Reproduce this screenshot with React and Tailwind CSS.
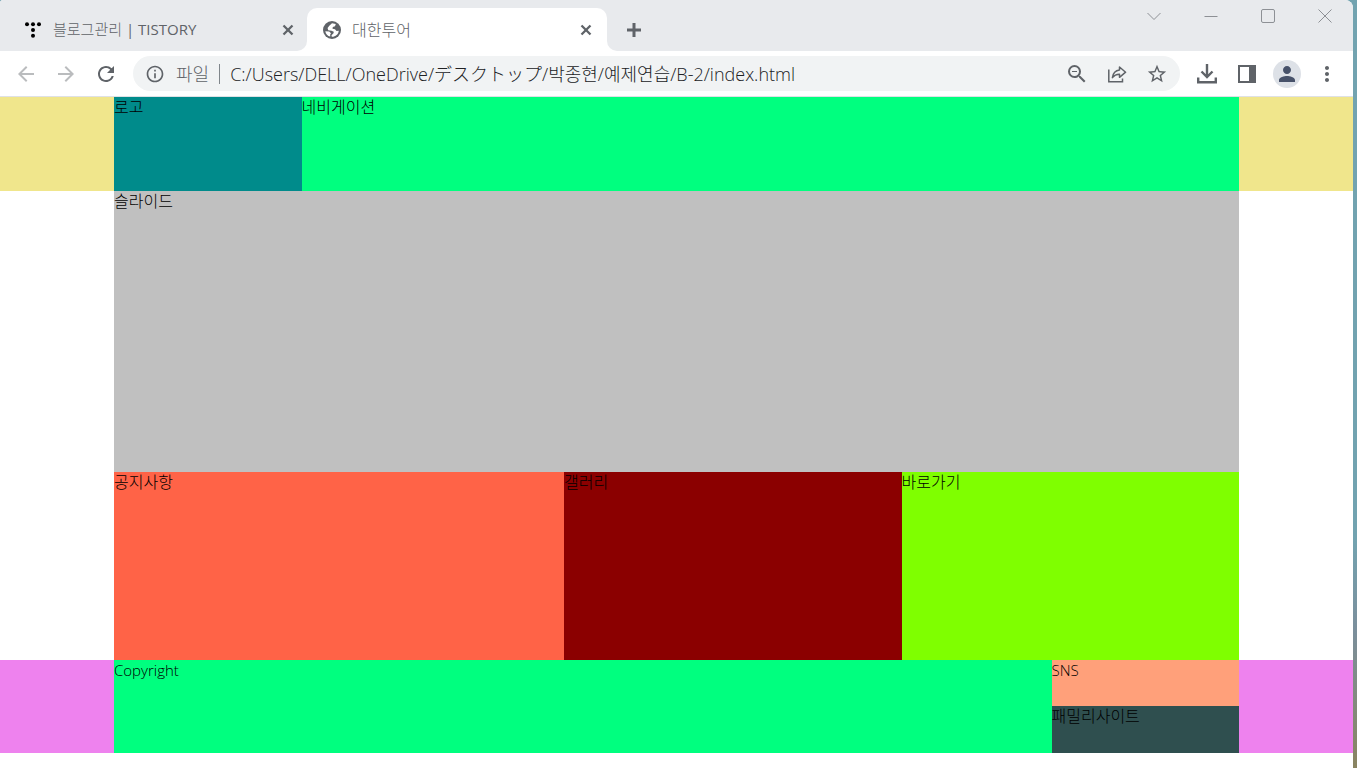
import { useState } from "react"
import { Plus, X } from "lucide-react"
import { MdArrowBack, MdArrowForward, MdRefresh, MdInfoOutline, MdZoomOut, MdStarBorder, MdMoreVert, MdPerson } from "react-icons/md"

const TistoryIcon = () => (
    <svg viewBox="0 0 16 16" className="size-4 shrink-0" fill="#000">
        <circle cx="2" cy="2.2" r="2" />
        <circle cx="8" cy="2.2" r="2" />
        <circle cx="14" cy="2.2" r="2" />
        <circle cx="8" cy="8" r="2" />
        <circle cx="8" cy="13.8" r="2" />
    </svg>
)

const GlobeIcon = () => (
    <svg viewBox="0 0 18 18" className="size-[18px] shrink-0">
        <circle cx="9" cy="9" r="9" fill="#5f6368" />
        <path d="M9 2.200L12.800 3L12 5.200L9.800 6L9.500 7.800L12 8.200L13.500 10L15.800 9.800C15.400 13.500 12.500 15.900 8.800 15.800L8.500 14.200L10.500 12.200L10.800 10.800L8.500 9.800L5.200 9.200L4.600 7L6.300 4.800Z" fill="#fff" />
        <path d="M2.300 10.200L6.200 10.600L8 12.200L7.200 13.600V15.500C4.700 15 2.700 13 2.300 10.200Z" fill="#fff" />
    </svg>
)

const ShareIcon = () => (
    <svg viewBox="0 0 20 20" className="size-5" fill="none" stroke="#5f6368" strokeWidth="1.500">
        <path d="M1.800 5.500V17.700H15.500V14.500" />
        <path d="M12.500 3L18.600 8.200L12.500 13.300V10.300C9.500 10.200 7.300 11.200 5.400 13.600C6 9.600 8.300 6.600 12.500 6.100Z" strokeLinejoin="round" />
    </svg>
)

const DownloadIcon = () => (
    <svg viewBox="0 0 20 20" className="size-5" fill="none" stroke="#5f6368" strokeWidth="2.400">
        <path d="M10 0V13M4.500 7.500L10 13L15.500 7.500" />
        <path d="M1.200 13.500V18.300H18.800V13.500" />
    </svg>
)

const SidePanelIcon = () => (
    <svg viewBox="0 0 18 18" className="size-[18px]">
        <path d="M0 0H18V18H0ZM2 2V16H11V2Z" fill="#5f6368" fillRule="evenodd" />
    </svg>
)

const toolButton = "flex w-10 h-8 shrink-0 items-center justify-center text-[#5f6368]"
const windowButton = "flex w-[57px] h-8 items-center justify-center"

function TabBar() {
    return (
        <div className="flex h-[51px] bg-white text-[#5f6368]">
            <div className="flex w-[307px] shrink-0 items-center rounded-br-[10px] bg-[#e8eaed] pl-[25px] pr-[10px] pt-2">
                <TistoryIcon />
                <span className="ml-3 grow whitespace-nowrap text-[15px]">블로그관리 <span className="font-normal">| TISTORY</span></span>
                <button aria-label="탭 닫기"><X className="size-[18px]" strokeWidth={3} strokeLinecap="butt" /></button>
            </div>
            <div className="w-[300px] shrink-0 bg-[#e8eaed] pt-2">
                <div className="flex h-full items-center rounded-t-[10px] bg-white pl-4 pr-3">
                    <GlobeIcon />
                    <span className="ml-[11px] grow whitespace-nowrap text-base">대한투어</span>
                    <button aria-label="탭 닫기"><X className="size-[18px]" strokeWidth={3} strokeLinecap="butt" /></button>
                </div>
            </div>
            <div className="flex grow items-start rounded-bl-[10px] bg-[#e8eaed]">
                <button aria-label="새 탭" className="mt-[18px] ml-[15px]"><Plus className="size-6" strokeWidth={3} strokeLinecap="butt" /></button>
                <div className="ml-auto flex">
                    <button aria-label="탭 검색" className={windowButton}>
                        <svg viewBox="0 0 14 14" className="size-3.5" fill="none" stroke="#8d9095"><path d="M.5 4L7 10.500L13.500 4" /></svg>
                    </button>
                    <button aria-label="최소화" className={windowButton}>
                        <svg viewBox="0 0 14 14" className="size-3.5" fill="none" stroke="#8d9095"><path d="M.5 7.500H13.500" /></svg>
                    </button>
                    <button aria-label="최대화" className={windowButton}>
                        <svg viewBox="0 0 14 14" className="size-3.5" fill="none" stroke="#8d9095"><rect x=".5" y=".5" width="13" height="13" rx="1.500" /></svg>
                    </button>
                    <button aria-label="닫기" className={windowButton}>
                        <svg viewBox="0 0 14 14" className="size-3.5" fill="none" stroke="#8d9095"><path d="M.5 .5L13.500 13.500M13.500 .5L.5 13.500" /></svg>
                    </button>
                </div>
            </div>
        </div>
    )
}

function AddressBar() {
    const [url, setUrl] = useState("C:/Users/DELL/OneDrive/デスクトップ/박종현/예제연습/B-2/index.html")

    return (
        <div className="flex h-[46px] items-center border-b border-[#dfe1e5] bg-white px-[6px]">
            <button aria-label="뒤로" className={toolButton}><MdArrowBack className="size-6 text-[#babcbe]" /></button>
            <button aria-label="앞으로" className={toolButton}><MdArrowForward className="size-6 text-[#babcbe]" /></button>
            <button aria-label="새로고침" className={toolButton}><MdRefresh className="size-6" /></button>
            <div className="ml-[7px] flex h-[35px] min-w-0 grow items-center rounded-full bg-[#f1f3f4] pl-3 pr-[3px]">
                <MdInfoOutline className="size-5 shrink-0 text-[#5f6368]" />
                <label htmlFor="url" className="ml-[11px] whitespace-nowrap text-lg text-[#5f6368]">파일</label>
                <span className="mx-[10px] h-5 w-px shrink-0 bg-[#80868b]" />
                <input id="url" value={url} onChange={(e) => setUrl(e.target.value)} className="min-w-0 grow text-lg text-[#202124] outline-none" />
                <button aria-label="축소" className={toolButton}><MdZoomOut className="size-6" /></button>
                <button aria-label="공유" className={toolButton}><ShareIcon /></button>
                <button aria-label="북마크" className={toolButton}><MdStarBorder className="size-[22px]" /></button>
            </div>
            <div className="ml-[7px] flex">
                <button aria-label="다운로드" className={toolButton}><DownloadIcon /></button>
                <button aria-label="측면 패널" className={toolButton}><SidePanelIcon /></button>
                <button aria-label="프로필" className={toolButton}>
                    <span className="flex size-7 items-center justify-center rounded-full bg-[#dde1e7]"><MdPerson className="size-6 text-[#47526a]" /></span>
                </button>
                <button aria-label="메뉴" className={toolButton}><MdMoreVert className="size-6" /></button>
            </div>
        </div>
    )
}

function Page() {
    return (
        <div className="grow bg-white text-base leading-5 text-black">
            <header className="bg-[#f0e68c]">
                <div className="mx-auto flex h-[94px] max-w-[1125px]">
                    <h1 className="w-1/6 bg-[#008b8b]">로고</h1>
                    <nav className="w-5/6 bg-[#00ff7f]">네비게이션</nav>
                </div>
            </header>
            <main className="mx-auto max-w-[1125px]">
                <section className="h-[281px] bg-[#c0c0c0]">슬라이드</section>
                <div className="flex h-[188px]">
                    <section className="w-[40%] bg-[#ff6347]">공지사항</section>
                    <section className="w-[30%] bg-[#8b0000]">갤러리</section>
                    <section className="w-[30%] bg-[#7fff00]">바로가기</section>
                </div>
            </main>
            <footer className="bg-[#ee82ee]">
                <div className="mx-auto flex h-[93px] max-w-[1125px]">
                    <div className="w-5/6 bg-[#00ff7f] text-[15px]">Copyright</div>
                    <div className="flex w-1/6 flex-col">
                        <div className="h-[46px] bg-[#ffa07a] text-[15px]">SNS</div>
                        <div className="grow bg-[#2f4f4f]">패밀리사이트</div>
                    </div>
                </div>
            </footer>
        </div>
    )
}

export default function App() {
    return (
        <div className="flex min-h-screen bg-linear-to-b from-[#72a3b0] from-70% via-[#7b8f9c] via-82% to-[#8a8460] font-['Open_Sans','Noto_Sans_CJK_KR',sans-serif] font-light">
            <div className="mr-1 flex min-w-0 grow flex-col overflow-hidden rounded-tl-[3px] rounded-tr-lg">
                <TabBar />
                <AddressBar />
                <Page />
            </div>
        </div>
    )
}
